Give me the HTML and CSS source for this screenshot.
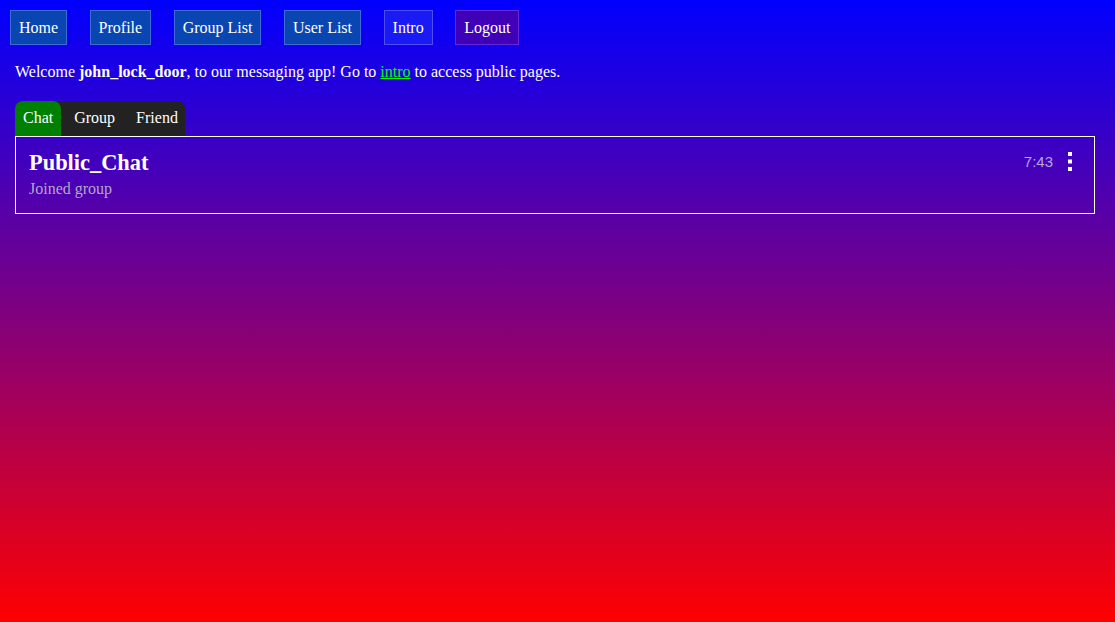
FILE: index.html
```html
<!DOCTYPE html>
<html>
<head>
<meta charset="utf-8">
<link rel="stylesheet" href="styles.css">
</head>
<body>
<nav class="nav">
  <a class="nav-btn" href="#">Home</a>
  <a class="nav-btn" href="#">Profile</a>
  <a class="nav-btn" href="#">Group List</a>
  <a class="nav-btn" href="#">User List</a>
  <a class="nav-btn nav-intro" href="#">Intro</a>
  <a class="nav-btn nav-logout" href="#">Logout</a>
</nav>
<main class="main">
  <p class="welcome">Welcome <b>john_lock_door</b>, to our messaging app! Go to <a class="intro-link" href="#">intro</a> to access public pages.</p>
  <div class="tabs">
    <span class="tab tab-chat active">Chat</span>
    <span class="tab tab-group">Group</span>
    <span class="tab tab-friend">Friend</span>
  </div>
  <div class="card">
    <div class="card-info">
      <div class="card-title">Public_Chat</div>
      <div class="card-sub">Joined group</div>
    </div>
    <div class="card-meta">
      <span class="card-time">7:43</span>
      <svg class="kebab" width="4" height="20" viewBox="0 0 4 20"><rect x="0" y="0" width="4" height="4" fill="#fff"/><rect x="0" y="7.5" width="4" height="4" fill="#fff"/><rect x="0" y="15" width="4" height="4" fill="#fff"/></svg>
    </div>
  </div>
</main>
</body>
</html>
```

FILE: styles.css
```css
html, body {
  margin: 0;
  padding: 0;
  height: 100%;
}
body {
  background: linear-gradient(to bottom, #0000ff 0%, #ff0000 100%);
  font-family: "Liberation Serif", "Times New Roman", serif;
  font-size: 16px;
  color: #fff;
  min-height: 622px;
}
.nav {
  display: flex;
  gap: 22.5px;
  padding: 10px 10px 0 10px;
}
.nav-btn {
  display: block;
  box-sizing: border-box;
  height: 35px;
  line-height: 33px;
  padding: 0 8px;
  border: 1px solid rgba(80, 120, 230, 0.75);
  background: #0a46b2;
  color: #fff;
  text-decoration: none;
}
.nav-intro {
  background: #1a1af4;
  border-color: rgba(90, 90, 255, 0.8);
}
.nav-logout {
  background: #4000b8;
  border-color: rgba(110, 50, 230, 0.8);
}
.main {
  padding: 0 20px 0 15px;
}
.welcome {
  margin: 17px 0 0 0;
  line-height: 19px;
}
.intro-link {
  color: #00ff00;
}
.tabs {
  display: inline-flex;
  margin-top: 20px;
  background: #222222;
  border-radius: 8px 8px 0 0;
  height: 35px;
}
.tab {
  display: block;
  line-height: 33px;
  color: #fff;
  border-radius: 8px 8px 0 0;
}
.tab-chat {
  padding: 0 8px;
  background: #008000;
}
.tab-group {
  padding: 0 11px 0 13px;
}
.tab-friend {
  padding: 0 7px 0 10px;
}
.card {
  display: flex;
  justify-content: space-between;
  border: 1px solid #fff;
  padding: 12px 13px 13px 13px;
}
.card-title {
  font-weight: bold;
  font-size: 22.4px;
  line-height: 28px;
}
.card-sub {
  color: rgba(200, 200, 205, 0.85);
  line-height: 22px;
  margin-top: 1px;
}
.card-meta {
  display: flex;
  align-items: flex-start;
  gap: 15px;
  padding-top: 3px;
  margin-right: 9px;
}
.card-time {
  font-family: "Liberation Sans", Arial, sans-serif;
  font-size: 15px;
  line-height: 20px;
  color: rgba(205, 200, 225, 0.85);
}
.kebab {
  display: block;
  margin-top: 0;
}
```
